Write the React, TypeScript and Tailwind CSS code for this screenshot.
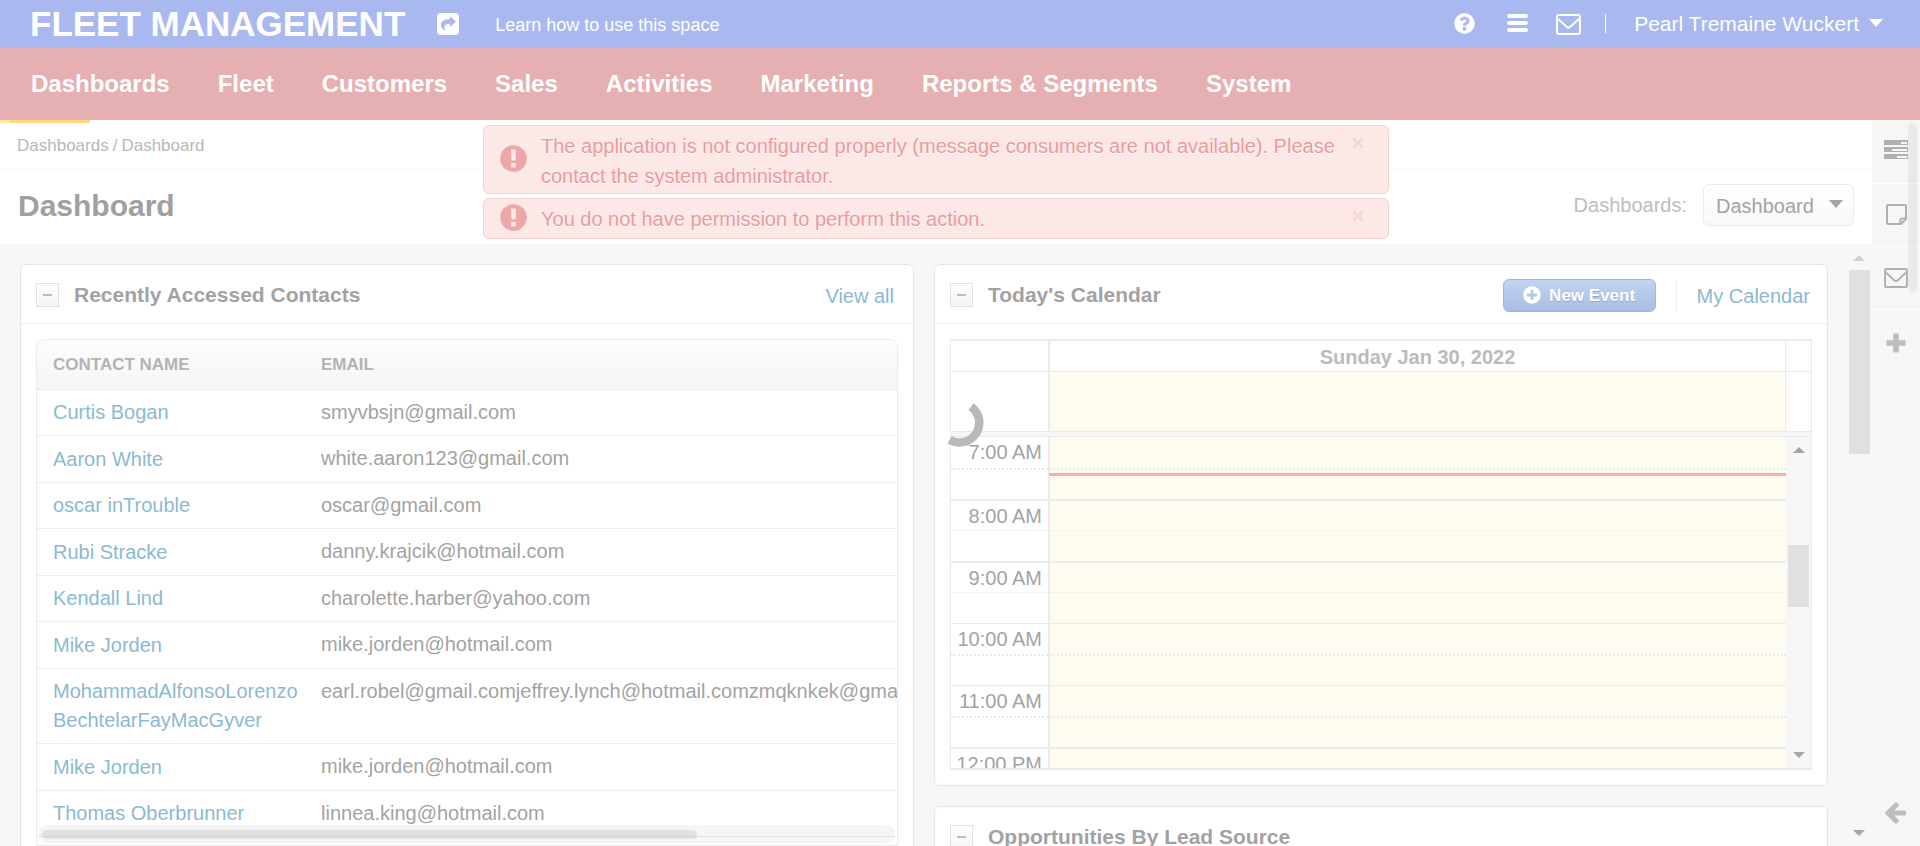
import type { ReactNode } from "react";
import { FaQuestionCircle, FaPlusCircle, FaTimes } from "react-icons/fa";

const navItems = ["Dashboards", "Fleet", "Customers", "Sales", "Activities", "Marketing", "Reports & Segments", "System"];

const contacts = [
  { name: ["Curtis Bogan"], email: "smyvbsjn@gmail.com" },
  { name: ["Aaron White"], email: "white.aaron123@gmail.com" },
  { name: ["oscar inTrouble"], email: "oscar@gmail.com" },
  { name: ["Rubi Stracke"], email: "danny.krajcik@hotmail.com" },
  { name: ["Kendall Lind"], email: "charolette.harber@yahoo.com" },
  { name: ["Mike Jorden"], email: "mike.jorden@hotmail.com" },
  {
    name: ["MohammadAlfonsoLorenzo", "BechtelarFayMacGyver"],
    email: "earl.robel@gmail.comjeffrey.lynch@hotmail.comzmqknkek@gmail.com",
  },
  { name: ["Mike Jorden"], email: "mike.jorden@hotmail.com" },
  { name: ["Thomas Oberbrunner"], email: "linnea.king@hotmail.com" },
];

const slots = [
  { label: "7:00 AM", line: "border-t-0" },
  { label: "", line: "border-t-2 border-dotted" },
  { label: "8:00 AM", line: "border-t-2" },
  { label: "", line: "border-t border-dotted" },
  { label: "9:00 AM", line: "border-t-2" },
  { label: "", line: "border-t border-dotted" },
  { label: "10:00 AM", line: "border-t" },
  { label: "", line: "border-t-2 border-dotted" },
  { label: "11:00 AM", line: "border-t" },
  { label: "", line: "border-t-2 border-dotted" },
  { label: "12:00 PM", line: "border-t-2" },
];

function Envelope({ className }: { className: string }) {
  return (
    <svg viewBox="0 0 25 21" fill="none" stroke="currentColor" strokeWidth="2" className={className} aria-hidden="true">
      <rect x="1" y="1" width="23" height="19" rx="2" />
      <path d="M1.5 4.500C5 7.500 7.500 10 10 12.300c1.800 1.800 3.200 1.800 5 0 2.500-2.300 5-4.800 8.500-7.800" />
    </svg>
  );
}

function Triangle({ up = false, className }: { up?: boolean; className: string }) {
  return (
    <svg viewBox="0 0 12 6" preserveAspectRatio="none" fill="currentColor" className={className} aria-hidden="true">
      <path d={up ? "M0 6 6 0l6 6z" : "M0 0h12L6 6z"} />
    </svg>
  );
}

function Alert({ children }: { children: ReactNode }) {
  return (
    <div
      role="alert"
      className="flex items-start rounded-md border border-[#f8cfcf] bg-[#fde8e8] pb-0.5 pl-4 pr-[22px] pt-[5px] text-[#e99a9c] [text-shadow:0_1px_0_#fff]"
    >
      <svg viewBox="0 0 27 27" className="mb-[5px] mr-3.5 size-[27px] shrink-0 self-center" aria-hidden="true">
        <circle cx="13.5" cy="13.5" r="13.3" fill="#eca7a8" />
        <path d="M11 4.500h5l-.5 11h-4zM11.200 18h4.600v4.500h-4.600z" fill="#fde8e8" />
      </svg>
      <p className="flex-1 pr-2 text-[20px] leading-[30px]">{children}</p>
      <button type="button" aria-label="Close" className="mt-1 text-[#f5d5d7]">
        <FaTimes className="size-4" />
      </button>
    </div>
  );
}

function WidgetHeader({ title, children }: { title: string; children?: ReactNode }) {
  return (
    <header className="flex h-[59px] items-center border-b border-[#ededed] px-[15px] pb-3 pt-[13px]">
      <button
        type="button"
        aria-label={"Collapse " + title}
        className="flex h-6 w-[23px] items-center justify-center border border-[#e2e2e2] bg-linear-to-b from-white to-[#f4f4f4]"
      >
        <span className="h-0.5 w-[9px] bg-[#bdbdbd]" />
      </button>
      <h2 className="ml-[15px] text-[21px] font-bold leading-6 text-[#a2a2a2]">{title}</h2>
      <div className="ml-auto flex items-center pt-0.5">{children}</div>
    </header>
  );
}

export default function App() {
  return (
    <div className="flex h-screen flex-col overflow-hidden bg-[#f7f7f7] font-['Liberation_Sans',Arial,sans-serif] text-[20px] text-[#a3a3a3]">
      <header className="flex h-12 shrink-0 items-center bg-[#aab8f0] pl-[30px] pr-[37px] text-white">
        <a href="#" className="text-[35px] font-bold leading-[48px]">FLEET MANAGEMENT</a>
        <a href="#" aria-label="Open space" className="ml-8">
          <svg viewBox="0 0 22 22" className="size-[22px]" aria-hidden="true">
            <rect width="22" height="22" rx="4" fill="currentColor" />
            <path d="M13 3.200 19 8.500 13 14v-3.300c-3.500-.2-5.300.8-5.500 3.200-.1 1.600.4 3 1.200 4.300C5.500 16.500 4 14.500 4 12c0-4 3.500-5.700 9-5.700z" fill="#aab8f0" />
          </svg>
        </a>
        <a href="#" className="ml-9 pt-0.5 text-[18px]">Learn how to use this space</a>
        <div className="ml-auto flex items-center">
          <a href="#" aria-label="Help"><FaQuestionCircle className="mb-0.5 size-[21px]" /></a>
          <button type="button" aria-label="Menu" className="mb-0.5 ml-8 flex w-[21px] flex-col gap-[3px]">
            <span className="h-1 w-full rounded-xs bg-white" />
            <span className="h-1 w-full rounded-xs bg-white" />
            <span className="h-1 w-full rounded-xs bg-white" />
          </button>
          <a href="#" aria-label="Emails" className="ml-7"><Envelope className="h-[21px] w-[25px]" /></a>
          <span className="mb-0.5 ml-6 h-[19px] w-px bg-white" />
          <button type="button" className="ml-7 flex items-center text-[21px]">
            Pearl Tremaine Wuckert
            <Triangle className="mb-0.5 ml-2.5 h-2 w-3.5" />
          </button>
        </div>
      </header>

      <nav className="relative flex h-[72px] shrink-0 items-center gap-12 bg-[#e6afb1] pl-[31px] text-[24px] font-bold text-white">
        {navItems.map((item) => (
          <a key={item} href="#">{item}</a>
        ))}
        <span className="absolute left-0 top-full z-10 h-[3px] w-[90px] rounded-br-xs border-l-10 border-[#ffe7a6] bg-[#ffd978]" />
      </nav>

      <div className="relative flex min-h-0 flex-1">
        <div className="flex min-w-0 flex-1 flex-col">
          <div className="shrink-0 bg-white">
            <div className="flex h-[50px] items-center gap-1 border-b border-[#f6f6f6] pl-[17px] pt-0.5 text-[17px] text-[#b8b8b8]">
              <a href="#">Dashboards</a>
              <span>/</span>
              <span>Dashboard</span>
            </div>
            <div className="flex h-[74px] items-center justify-between pb-1 pl-[18px] pr-[18px]">
              <h1 className="text-[30px] font-bold text-[#a0a0a0]">Dashboard</h1>
              <div className="flex items-center">
                <label htmlFor="dashboard" className="mr-4 text-[#bdbdbd]">Dashboards:</label>
                <div className="relative">
                  <select
                    id="dashboard"
                    className="h-[42px] w-[151px] appearance-none rounded-md border border-[#ececec] bg-linear-to-b from-white to-[#f8f8f8] pl-3 pt-0.5 text-[20px] text-[#a3a3a3]"
                  >
                    <option>Dashboard</option>
                  </select>
                  <Triangle className="pointer-events-none absolute right-[11px] top-4 h-2 w-3.5" />
                </div>
              </div>
            </div>
          </div>

          <div className="flex min-h-0 flex-1 overflow-hidden">
            <main className="grid flex-1 grid-cols-2 items-start gap-5 p-5">
              <section className="min-w-0 rounded-md border border-[#e6e6e6] bg-white">
                <WidgetHeader title="Recently Accessed Contacts">
                  <a href="#" className="mr-1 text-[#8cb9d2]">View all</a>
                </WidgetHeader>
                <div className="relative mx-[15px] mb-4 mt-[15px] overflow-hidden rounded-t-lg border border-[#ebebeb]">
                  <table className="w-full table-fixed border-separate border-spacing-0 text-left">
                    <thead>
                      <tr className="h-[50px] bg-linear-to-b from-[#fcfcfc] to-[#f5f5f5] text-[17px] text-[#b3b3b3]">
                        <th className="w-[268px] border-b border-[#ebebeb] pl-4">CONTACT NAME</th>
                        <th className="border-b border-[#ebebeb] pl-4">EMAIL</th>
                      </tr>
                    </thead>
                    <tbody className="leading-[29px]">
                      {contacts.map((c, i) => (
                        <tr key={i} className="odd:h-[46px] even:h-[47px]">
                          <td className="border-b border-[#ededed] py-2 pl-4 align-middle text-[#8cb9d2]">
                            {c.name.map((part) => (
                              <a key={part} href="#" className="block">{part}</a>
                            ))}
                          </td>
                          <td className="whitespace-nowrap border-b border-[#ededed] py-2 pl-4 align-top">{c.email}</td>
                        </tr>
                      ))}
                    </tbody>
                  </table>
                  <div className="absolute inset-x-0.5 bottom-0.5 h-[18px] rounded-lg bg-black/4 px-[3px] py-[5px]">
                    <div className="h-[9px] w-[77%] rounded-full bg-black/8" />
                  </div>
                  <div className="h-2" />
                </div>
              </section>

              <div className="flex min-w-0 flex-col gap-5">
                <section className="rounded-md border border-[#e6e6e6] bg-white">
                  <WidgetHeader title="Today's Calendar">
                    <button
                      type="button"
                      className="flex h-[33px] w-[153px] items-center justify-center rounded-md border border-[#a5b6d2] bg-linear-to-b from-[#c0d3f1] to-[#a8bee4] text-[17px] font-bold text-white [text-shadow:0_1px_0_#8fa5c8]"
                    >
                      <FaPlusCircle className="mb-0.5 mr-2 size-[18px]" />
                      New Event
                    </button>
                    <span className="mx-5 h-[30px] w-px bg-[#ededed]" />
                    <a href="#" className="mr-0.5 text-[#8cb9d2]">My Calendar</a>
                  </WidgetHeader>

                  <div className="m-[15px] border border-y-2 border-[#ebebeb]">
                    <div className="flex h-[31px] border-b border-[#ebebeb] font-bold text-[#bbbbbb]">
                      <div className="w-[99px] border-r-2 border-[#ebebeb]" />
                      <div className="flex flex-1 items-center justify-center pt-0.5">Sunday Jan 30, 2022</div>
                      <div className="w-[26px] border-l border-[#ebebeb]" />
                    </div>
                    <div className="flex h-[60px] border-b border-[#ebebeb]">
                      <div className="w-[99px] border-r-2 border-[#ebebeb]" />
                      <div className="flex-1 bg-[#fefbf0]" />
                      <div className="w-[26px] border-l border-[#ebebeb]" />
                    </div>
                    <div className="h-[5px] border-b border-[#ebebeb] bg-[#f7f7f7]" />
                    <div className="flex h-[331px] overflow-hidden">
                      <div className="relative flex-1">
                        {slots.map((slot, i) => (
                          <div key={i} className="flex h-[31px]">
                            <div className="w-[99px] border-r-2 border-[#ebebeb]">
                              <div className={"h-[31px] border-[#ebebeb] pr-1.5 text-right leading-[30px] " + slot.line}>
                                {slot.label}
                              </div>
                            </div>
                            <div className={"flex-1 border-[#ebebeb] bg-[#fefbf0] " + slot.line} />
                          </div>
                        ))}
                        <div className="absolute left-[98px] right-0 top-9 h-[3px] bg-[#ffaaab]" />
                      </div>
                      <div className="flex w-[25px] flex-col items-center bg-[#f7f7f7] text-[#a6a6a6]">
                        <Triangle up className="mt-2.5 h-1.5 w-3" />
                        <div className="mt-[92px] h-[62px] w-[21px] bg-[#e0e0e0]" />
                        <Triangle className="mb-2.5 mt-auto h-1.5 w-3" />
                      </div>
                    </div>
                  </div>
                </section>

                <section className="rounded-md border border-[#e6e6e6] bg-white">
                  <WidgetHeader title="Opportunities By Lead Source" />
                  <div className="h-80" />
                </section>
              </div>
            </main>

            <div className="flex w-6 shrink-0 flex-col items-center pb-2.5 pr-0.5 text-[#a6a6a6]">
              <Triangle up className="mt-[11px] h-1.5 w-3 text-[#d0d0d0]" />
              <div className="mt-[9px] h-[184px] w-[21px] bg-[#e0e0e0]" />
              <Triangle className="mt-auto h-1.5 w-3" />
            </div>
          </div>
        </div>

        <aside className="relative flex w-12 shrink-0 flex-col bg-[#f6f6f6] text-[#b0b0b0]">
          <a href="#" aria-label="Tasks" className="flex h-16 items-center justify-center border-b border-white pb-1">
            <svg viewBox="0 0 24 19" className="h-[19px] w-6" aria-hidden="true">
              <path d="M0 0h24v5H0zM0 7h24v5H0zM0 14h24v5H0z" fill="currentColor" />
              <path d="M17 2h6v2h-6zM8 9h15v2H8zM13 16h10v2H13z" fill="#f6f6f6" />
            </svg>
          </a>
          <a href="#" aria-label="Notes" className="flex h-[63px] items-center justify-center border-b border-white pb-0.5">
            <svg viewBox="0 0 21 21" fill="none" stroke="currentColor" strokeWidth="2" className="size-[21px]" aria-hidden="true">
              <path d="M2 1h17a1 1 0 0 1 1 1v13l-5 5H2a1 1 0 0 1-1-1V2a1 1 0 0 1 1-1z" />
              <path d="M14.500 20v-4.500a1 1 0 0 1 1-1H20" />
            </svg>
          </a>
          <a href="#" aria-label="Emails" className="flex h-[63px] items-center justify-center border-b border-white">
            <Envelope className="h-5 w-6" />
          </a>
          <button type="button" aria-label="Add" className="flex h-[66px] items-center justify-center text-[#bdbdbd]">
            <svg viewBox="0 0 20 20" fill="currentColor" className="size-5" aria-hidden="true">
              <rect x="7.200" y="0.500" width="5.600" height="19" rx="1" />
              <rect x="0.500" y="7.200" width="19" height="5.600" rx="1" />
            </svg>
          </button>
          <button type="button" aria-label="Collapse" className="mb-[22px] mt-auto flex justify-center text-[#bdbdbd]">
            <svg viewBox="0 0 22 22" fill="currentColor" className="size-[22px]" aria-hidden="true">
              <path d="M.6 10 9.700.900c.8-.8 1.700-.8 2.500 0l1 1c.8.800.8 1.700 0 2.500L9.300 8.500H19c1.300 0 2 .7 2 1.800v1.400c0 1.100-.7 1.800-2 1.800H9.300l3.900 4.100c.8.800.8 1.700 0 2.500l-1 1c-.8.800-1.700.8-2.500 0L.6 12c-.6-.6-.6-1.400 0-2z" />
            </svg>
          </button>
          <span className="absolute right-[3px] top-[3px] h-[169px] w-[9px] rounded-full bg-black/5" />
        </aside>

        <div className="absolute left-[483px] right-[531px] top-[5px] flex flex-col gap-1">
          <Alert>
            The application is not configured properly (message consumers are not available). Please contact the system administrator.
          </Alert>
          <Alert>You do not have permission to perform this action.</Alert>
        </div>
      </div>

      <svg viewBox="0 0 48 48" className="fixed left-1/2 top-1/2 size-12 -translate-1/2" role="img" aria-label="Loading">
        <path d="M35 7.600A19.800 19.800 0 0 1 13.500 40.800" fill="none" stroke="#b9b9b9" strokeWidth="8.500" />
      </svg>
    </div>
  );
}
